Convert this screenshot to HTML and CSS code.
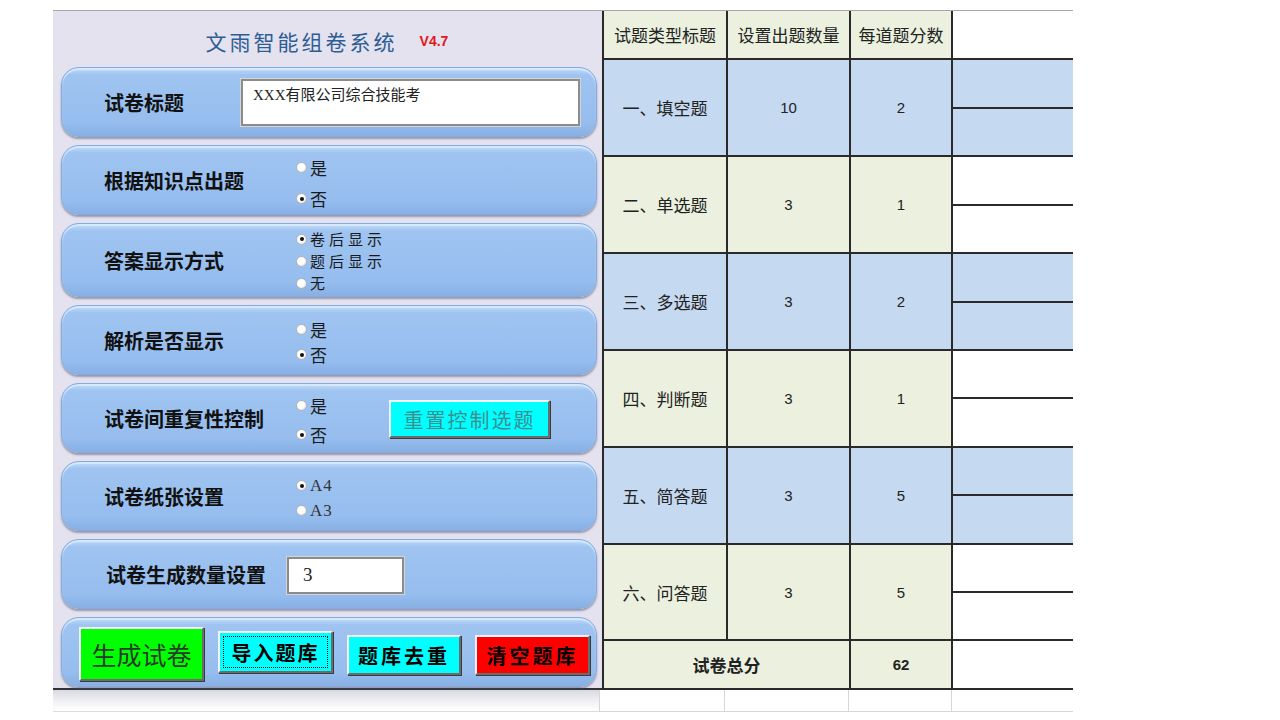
FILE: index.html
```html
<!DOCTYPE html>
<html lang="zh-CN">
<head>
    <meta charset="UTF-8">
    <meta name="viewport" content="width=device-width, initial-scale=1.0">
    <title>文雨智能组卷系统</title>
    <link rel="stylesheet" href="styles.css">
</head>
<body>
    <div class="sheet">
        <div class="panel">
            <div class="titulo">文雨智能组卷系统<span class="versao">V4.7</span></div>

            <div class="pill">
                <span class="label label-curto">试卷标题</span>
                <div class="caixa caixa-titulo">XXX有限公司综合技能考</div>
            </div>

            <div class="pill">
                <span class="label">根据知识点出题</span>
                <div class="opcoes gap-10">
                    <div class="opcao"><span class="radio"></span>是</div>
                    <div class="opcao"><span class="radio on"></span>否</div>
                </div>
            </div>

            <div class="pill pill-alto">
                <span class="label">答案显示方式</span>
                <div class="opcoes gap-0">
                    <div class="opcao compacta"><span class="radio on"></span>卷后显示</div>
                    <div class="opcao compacta"><span class="radio"></span>题后显示</div>
                    <div class="opcao compacta"><span class="radio"></span>无</div>
                </div>
            </div>

            <div class="pill">
                <span class="label">解析是否显示</span>
                <div class="opcoes gap-4">
                    <div class="opcao"><span class="radio"></span>是</div>
                    <div class="opcao"><span class="radio on"></span>否</div>
                </div>
            </div>

            <div class="pill">
                <span class="label">试卷间重复性控制</span>
                <div class="opcoes gap-8 opcoes-fixas">
                    <div class="opcao"><span class="radio"></span>是</div>
                    <div class="opcao"><span class="radio on"></span>否</div>
                </div>
                <button class="botao botao-reset">重置控制选题</button>
            </div>

            <div class="pill">
                <span class="label">试卷纸张设置</span>
                <div class="opcoes gap-4">
                    <div class="opcao latino"><span class="radio on"></span>A4</div>
                    <div class="opcao latino"><span class="radio"></span>A3</div>
                </div>
            </div>

            <div class="pill">
                <span class="label label-qtd">试卷生成数量设置</span>
                <div class="caixa caixa-qtd">3</div>
            </div>

            <div class="pill pill-botoes">
                <button class="botao botao-gerar">生成试卷</button>
                <button class="botao botao-importar">导入题库</button>
                <button class="botao botao-dedup">题库去重</button>
                <button class="botao botao-limpar">清空题库</button>
            </div>
        </div>

        <table class="tabela">
            <colgroup>
                <col class="c1"><col class="c2"><col class="c3"><col class="c4">
            </colgroup>
            <tr class="cabecalho">
                <th>试题类型标题</th>
                <th>设置出题数量</th>
                <th>每道题分数</th>
                <th class="vazio"></th>
            </tr>
            <tr class="azul">
                <td rowspan="2">一、填空题</td>
                <td rowspan="2" class="num">10</td>
                <td rowspan="2" class="num">2</td>
                <td class="extra"></td>
            </tr>
            <tr class="azul"><td class="extra"></td></tr>
            <tr class="creme">
                <td rowspan="2">二、单选题</td>
                <td rowspan="2" class="num">3</td>
                <td rowspan="2" class="num">1</td>
                <td class="extra"></td>
            </tr>
            <tr class="creme"><td class="extra"></td></tr>
            <tr class="azul">
                <td rowspan="2">三、多选题</td>
                <td rowspan="2" class="num">3</td>
                <td rowspan="2" class="num">2</td>
                <td class="extra"></td>
            </tr>
            <tr class="azul"><td class="extra"></td></tr>
            <tr class="creme">
                <td rowspan="2">四、判断题</td>
                <td rowspan="2" class="num">3</td>
                <td rowspan="2" class="num">1</td>
                <td class="extra"></td>
            </tr>
            <tr class="creme"><td class="extra"></td></tr>
            <tr class="azul">
                <td rowspan="2">五、简答题</td>
                <td rowspan="2" class="num">3</td>
                <td rowspan="2" class="num">5</td>
                <td class="extra"></td>
            </tr>
            <tr class="azul"><td class="extra"></td></tr>
            <tr class="creme">
                <td rowspan="2">六、问答题</td>
                <td rowspan="2" class="num">3</td>
                <td rowspan="2" class="num">5</td>
                <td class="extra"></td>
            </tr>
            <tr class="creme"><td class="extra"></td></tr>
            <tr class="creme total">
                <td colspan="2">试卷总分</td>
                <td class="num">62</td>
                <td class="extra"></td>
            </tr>
        </table>
    </div>

    <div class="rodape">
        <div class="sombra"></div>
        <div class="linhas">
            <span class="l1"></span><span class="l2"></span><span class="l3"></span><span class="l4"></span>
        </div>
    </div>
</body>
</html>
```

FILE: styles.css
```css
body {
    margin: 0;
    background: #ffffff;
    font-family: "Noto Sans CJK SC", "Liberation Sans", sans-serif;
    color: #111111;
}

.sheet {
    display: flex;
    width: 1020px;
    margin: 10px 0 0 53px;
    border-top: 1px solid #a8a8a8;
}

/* painel da esquerda */
.panel {
    width: 550px;
    box-sizing: border-box;
    background-color: #e4e2ef;
    padding: 0 5px 1px 8px;
    display: flex;
    flex-direction: column;
    gap: 8px;
    border-bottom: 2px solid #333333;
}

.titulo {
    height: 48px;
    padding-top: 6px;
    display: flex;
    justify-content: center;
    align-items: center;
    font-size: 21px;
    letter-spacing: 3px;
    color: #2d5d93;
    margin-bottom: -6px;
    padding-right: 4px;
}

.versao {
    margin-left: 22px;
    font-family: "Liberation Sans", sans-serif;
    font-weight: bold;
    font-size: 14px;
    letter-spacing: 0;
    color: #e3151b;
}

.pill {
    height: 70px;
    box-sizing: border-box;
    display: flex;
    align-items: center;
    padding-left: 42px;
    border-radius: 18px;
    border: 1px solid #86aadb;
    background: linear-gradient(#c3ddf9 0%, #9fc4f1 10%, #96bdee 80%, #88b0e4 100%);
    box-shadow: 0 2px 2px rgba(70, 80, 110, 0.5), inset 0 2px 1px #d6e9fd;
}

.pill-alto {
    height: 74px;
}

.label {
    width: 192px;
    font-size: 20px;
    font-weight: bold;
    color: #111111;
    flex-shrink: 0;
}

.label-curto {
    width: 137px;
}

.label-qtd {
    width: 181px;
    padding-left: 2px;
}

.caixa {
    box-sizing: border-box;
    background: #ffffff;
    border: 2px solid #8c8c8c;
    box-shadow: 0 0 0 1px #d4d4d4;
    font-family: "Liberation Serif", "Noto Sans CJK SC", serif;
    color: #222222;
}

.caixa-titulo {
    width: 339px;
    height: 47px;
    align-self: center;
    padding: 2px 10px;
    font-size: 15px;
    margin-top: 1px;
}

.caixa-qtd {
    width: 117px;
    height: 37px;
    padding: 5px 14px;
    font-size: 19px;
    margin-top: 2px;
}

/* radios */
.opcoes {
    display: flex;
    flex-direction: column;
    margin-top: 4px;
}

.gap-0 { gap: 0; margin-top: 2px; }
.gap-4 { gap: 4px; }
.gap-8 { gap: 8px; }
.gap-10 { gap: 10px; margin-top: 6px; }

.opcoes-fixas {
    width: 93px;
}

.opcao {
    display: flex;
    align-items: center;
    height: 21px;
    line-height: 21px;
    font-size: 17px;
    color: #1a1a1a;
}

.opcao.compacta {
    height: 22px;
    line-height: 22px;
    font-size: 15px;
    letter-spacing: 4px;
}

.latino {
    font-family: "Liberation Serif", serif;
    letter-spacing: 1px;
    color: #333333;
}

.radio {
    position: relative;
    display: inline-block;
    width: 9px;
    height: 9px;
    border-radius: 50%;
    border: 1px solid #b4b4b4;
    background: radial-gradient(circle at 40% 40%, #ffffff 45%, #d3d3d3 100%);
    margin-right: 3px;
    flex-shrink: 0;
}

.radio.on::after {
    content: "";
    position: absolute;
    left: 2.5px;
    top: 2.5px;
    width: 4px;
    height: 4px;
    border-radius: 50%;
    background: #111111;
}

/* botoes */
.botao {
    box-sizing: border-box;
    border-style: solid;
    border-width: 2px;
    border-color: #f4f4f4 #6c6c6c #6c6c6c #f4f4f4;
    box-shadow: 1px 1px 0 #3c3c3c;
    font-family: "Noto Sans CJK SC", serif;
    padding: 0;
    cursor: pointer;
}

.botao-reset {
    width: 161px;
    height: 38px;
    background: #00ffff;
    color: #3f8d8f;
    font-size: 20px;
    letter-spacing: 2px;
    margin-top: 2px;
}

.pill-botoes {
    padding-left: 17px;
    gap: 14px;
}

.botao-gerar {
    width: 125px;
    height: 54px;
    background: #00ff00;
    color: #2a3a2a;
    font-size: 25px;
    margin-top: 3px;
}

.botao-importar {
    width: 115px;
    height: 42px;
    background: #00ffff;
    font-size: 20px;
    font-weight: bold;
    letter-spacing: 2px;
    outline: 1px dotted #111111;
    outline-offset: -6px;
}

.botao-dedup {
    width: 114px;
    height: 40px;
    background: #00ffff;
    font-size: 20px;
    font-weight: bold;
    letter-spacing: 3px;
    margin-top: 6px;
}

.botao-limpar {
    width: 115px;
    height: 40px;
    background: #ff0000;
    font-size: 20px;
    font-weight: bold;
    letter-spacing: 3px;
    margin-top: 6px;
}

/* tabela da direita */
.tabela {
    width: 470px;
    table-layout: fixed;
    border-collapse: collapse;
    font-size: 17px;
    color: #222222;
}

.c1 { width: 124px; }
.c2 { width: 123px; }
.c3 { width: 102px; }
.c4 { width: 121px; }

.tabela th,
.tabela td {
    border: 2px solid #2a2a2a;
    text-align: center;
    padding: 0;
    font-weight: normal;
}

.cabecalho th {
    height: 47px;
    background: #ebf1de;
    border-top: 0;
}

.cabecalho .vazio {
    background: #ffffff;
    border-right: 0;
}

.tabela td {
    height: 46px;
}

.azul td { background: #c5d9f1; }
.creme td { background: #ebf1de; }
.creme .extra { background: #ffffff; }

.tabela .extra {
    border-right: 0;
}

.num {
    font-family: "Liberation Sans", sans-serif;
    font-size: 15px;
}

.total td {
    font-weight: bold;
    height: 46px;
}

/* linha vazia abaixo */
.rodape {
    display: flex;
    width: 1020px;
    margin-left: 53px;
    height: 22px;
}

.sombra {
    width: 550px;
    background: linear-gradient(#d9d9e2, #f3f3f6 60%, #ffffff);
    border-bottom: 1px solid #dddddd;
}

.linhas {
    display: flex;
    flex: 1;
    border-bottom: 1px solid #d6d6d6;
}

.linhas span {
    border-left: 1px solid #d6d6d6;
}

.l1 { width: 124px; }
.l2 { width: 123px; }
.l3 { width: 102px; }
.l4 { width: 121px; }
```
